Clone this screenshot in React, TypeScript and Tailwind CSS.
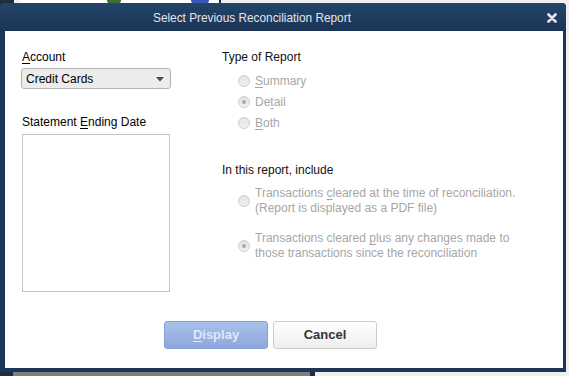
import React from "react";

type RadioProps = {
  checked?: boolean;
};

function Radio({ checked }: RadioProps) {
  return (
    <span className="flex h-[12px] w-[12px] shrink-0 items-center justify-center rounded-full border border-[#cfcfcf] bg-gradient-to-b from-[#e4e4e4] to-[#f2f2f2]">
      {checked && <span className="h-[4px] w-[4px] rounded-full bg-[#a9a9a9]" />}
    </span>
  );
}

function U({ children }: { children: React.ReactNode }) {
  return <span className="underline underline-offset-[2px]">{children}</span>;
}

export default function App() {
  return (
    <div
      className="relative h-[376px] w-[569px] overflow-hidden bg-[#efefef] text-[12px]"
      style={{ fontFamily: '"Liberation Sans", Arial, sans-serif' }}
    >
      {/* desktop behind the dialog */}
      <div className="absolute left-0 top-0 h-[376px] w-[14px] bg-[#1d2c3e]" />
      <div className="absolute left-[20px] top-0 h-[4px] w-[200px] bg-white" />
      <div className="absolute left-[107px] top-[-4px] h-[8px] w-[14px] rounded-full bg-[#3f6b3a]" />
      <div className="absolute left-[191px] top-[-4px] h-[8px] w-[18px] rounded-full bg-[#3559b8]" />
      <div className="absolute left-[219px] top-0 h-[4px] w-[2px] bg-[#1d2c3e]" />
      <div className="absolute left-[13px] top-[372px] h-[4px] w-[297px] bg-[#7f7f7f]" />
      <div className="absolute left-[310px] top-[372px] h-[4px] w-[5px] bg-[#1d2c3e]" />

      {/* dialog window */}
      <div className="absolute left-0 top-[3px] flex h-[369px] w-[566px] flex-col rounded-t-[4px] bg-[#1c3657]">
        <div className="relative flex h-[28px] shrink-0 items-center rounded-t-[4px] bg-gradient-to-b from-[#234469] to-[#1b3455] pl-[153px]">
          <span className="mt-[1px] origin-left scale-x-[0.91] whitespace-nowrap text-[13px] text-[#e2e6ec]">
            Select Previous Reconciliation Report
          </span>
          <svg
            className="absolute left-[547px] top-[10px]"
            width="10"
            height="10"
            viewBox="0 0 10 10"
          >
            <path d="M1.5 1.5 L8.5 8.5 M8.5 1.5 L1.5 8.5" stroke="#e8e8e8" strokeWidth="2.6" strokeLinecap="round" />
          </svg>
        </div>

        <div className="mb-[4px] ml-[5px] mr-[3px] flex flex-1 flex-col bg-white">
          <div className="flex">
            {/* left column */}
            <div className="ml-[16px] flex w-[150px] flex-col">
              <div className="ml-[1px] mt-[19px] h-[14px] leading-[14px] text-black">
                <U>A</U>ccount
              </div>
              <div className="relative mt-[4px] flex h-[21px] items-center rounded-[3px] border border-[#b3b3b3] bg-[#ececec] pl-[4px] text-black">
                Credit Cards
                <svg className="absolute right-[6px] top-[8px]" width="8" height="5" viewBox="0 0 8 5">
                  <path d="M0 0 L8 0 L4 4.5 Z" fill="#4a4a4a" />
                </svg>
              </div>
              <div className="ml-[1px] mt-[26px] h-[14px] leading-[14px] text-black">
                Statement <U>E</U>nding Date
              </div>
              <div className="ml-[1px] mt-[5px] h-[158px] w-[148px] border border-[#c4c4c4] bg-white" />
            </div>

            {/* right column */}
            <div className="ml-[51px] flex flex-col">
              <div className="mt-[19px] h-[14px] leading-[14px] text-[#111]">Type of Report</div>
              <div className="ml-[16px] mt-[6px] flex flex-col text-[#a6a6a6]">
                <div className="flex h-[21px] items-center gap-[5px]">
                  <Radio />
                  <span>
                    <U>S</U>ummary
                  </span>
                </div>
                <div className="flex h-[21px] items-center gap-[5px]">
                  <Radio checked />
                  <span>
                    De<U>t</U>ail
                  </span>
                </div>
                <div className="flex h-[21px] items-center gap-[5px]">
                  <Radio />
                  <span>
                    <U>B</U>oth
                  </span>
                </div>
              </div>

              <div className="mt-[30px] h-[14px] leading-[14px] text-[#111]">In this report, include</div>
              <div className="ml-[16px] mt-[9px] flex items-center gap-[5px] leading-[15px] text-[#a6a6a6]">
                <Radio />
                <div>
                  <div>
                    Transactions <U>c</U>leared at the time of reconciliation.
                  </div>
                  <div>(Report is displayed as a PDF file)</div>
                </div>
              </div>
              <div className="ml-[16px] mt-[15px] flex items-center gap-[5px] leading-[15px] text-[#a6a6a6]">
                <Radio checked />
                <div>
                  <div>
                    Transactions cleared <U>p</U>lus any changes made to
                  </div>
                  <div>those transactions since the reconciliation</div>
                </div>
              </div>
            </div>
          </div>

          {/* buttons */}
          <div className="ml-[159px] mt-[29px] flex gap-[5px]">
            <button className="flex h-[28px] w-[104px] items-center justify-center rounded-[3px] border border-[#829fd6] bg-gradient-to-b from-[#a9c1ec] to-[#8ea7dc] text-[13px] font-bold text-[#dfe7f6]">
              <span>
                <U>D</U>isplay
              </span>
            </button>
            <button className="flex h-[28px] w-[104px] items-center justify-center rounded-[3px] border border-[#cdcdcd] bg-gradient-to-b from-white to-[#eeeeee] text-[13px] font-bold text-[#333]">
              Cancel
            </button>
          </div>
        </div>
      </div>
    </div>
  );
}
